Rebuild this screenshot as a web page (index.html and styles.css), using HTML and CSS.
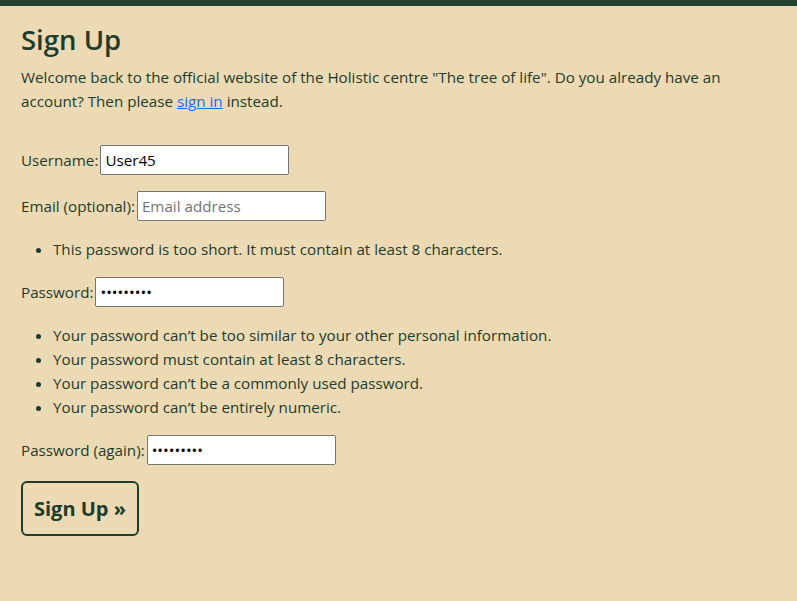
FILE: index.html
```html
<!DOCTYPE html>
<html lang="en">
<head>
<meta charset="utf-8">
<title>Sign Up</title>
<link rel="stylesheet" href="styles.css">
</head>
<body>
<div class="topbar"></div>
<main class="container">
  <h1 class="title">Sign Up</h1>
  <p class="intro">Welcome back to the official website of the Holistic centre "The tree of life". Do you already have an account? Then please <a href="#" class="link">sign in</a> instead.</p>
  <form class="signup">
    <p class="row"><label for="u">Username:</label> <input id="u" class="field" type="text" value="User45"></p>
    <p class="row"><label for="e">Email (optional):</label> <input id="e" class="field" type="email" placeholder="Email address"></p>
    <ul class="errors">
      <li>This password is too short. It must contain at least 8 characters.</li>
    </ul>
    <p class="row"><label for="p1">Password:</label> <input id="p1" class="field" type="password" value="123456789"></p>
    <ul class="errors">
      <li>Your password can’t be too similar to your other personal information.</li>
      <li>Your password must contain at least 8 characters.</li>
      <li>Your password can’t be a commonly used password.</li>
      <li>Your password can’t be entirely numeric.</li>
    </ul>
    <p class="row"><label for="p2">Password (again):</label> <input id="p2" class="field" type="password" value="123456789"></p>
    <button type="button" class="btn">Sign Up »</button>
  </form>
</main>
</body>
</html>
```
FILE: styles.css
```css
html, body {
  margin: 0;
  padding: 0;
}
body {
  background: #ecdab4;
  color: #1f3b2c;
  font-family: "Open Sans", "Noto Sans", sans-serif;
  font-size: 15.2px;
  line-height: 24px;
}
.topbar {
  height: 6px;
  background: #234232;
}
.container {
  padding: 17px 21px 0 21px;
}
.title {
  margin: 0 0 8px 0;
  font-size: 27.5px;
  line-height: 34px;
  font-weight: 600;
}
.intro {
  margin: 0 0 32px 0;
}
.link {
  color: #0d6efd;
}
.signup {
  margin: 0;
}
.row {
  margin: 0 0 16px 0;
  display: flex;
  align-items: center;
  gap: 2px;
  height: 30px;
}
.field {
  box-sizing: border-box;
  width: 189px;
  height: 30px;
  border: 1px solid #767676;
  border-radius: 2px;
  padding: 1px 4px;
  font-family: inherit;
  font-size: 15.2px;
  color: #000;
  background: #fff;
}
.field::placeholder {
  color: #757575;
}
.errors {
  margin: 0 0 16px 0;
  padding-left: 32px;
}
.btn {
  font-family: inherit;
  font-size: 20px;
  font-weight: 700;
  line-height: 31px;
  color: #1f3b2c;
  background: transparent;
  border: 2px solid #1f3b2c;
  border-radius: 6px;
  padding: 10px 10px;
  width: 118px;
  height: 55px;
}
```
